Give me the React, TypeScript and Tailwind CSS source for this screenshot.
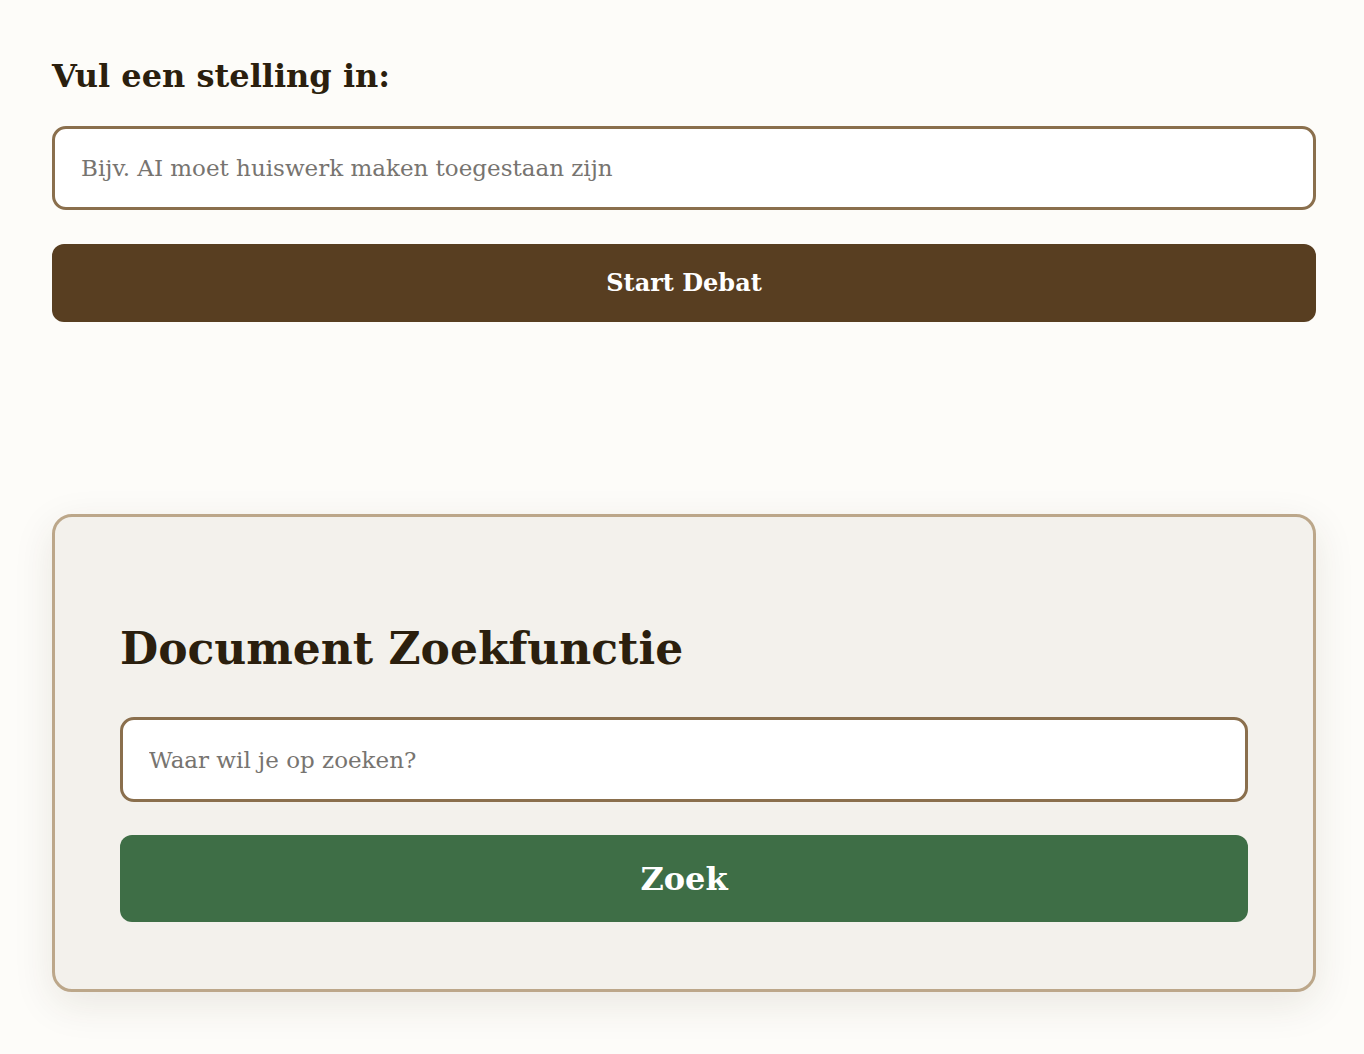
export default function App() {
  return (
    <div className="min-h-[1054px] bg-[#fdfcf9] pl-[52px] pr-[48px] pt-[52px] pb-[64px] text-[#2b1f0e] [font-family:'DejaVu_Serif',Georgia,serif]">
      <section>
        <h2 className="text-[32px] font-bold leading-[48px]">Vul een stelling in:</h2>
        <input
          type="text"
          placeholder="Bijv. AI moet huiswerk maken toegestaan zijn"
          className="mt-[26px] block h-[84px] w-full rounded-[14px] border-[3px] border-[#8a6f4d] bg-white px-[26px] text-[23px] text-[#2b1f0e] outline-none placeholder:text-[#777470]"
        />
        <button className="mt-[34px] block h-[78px] w-full rounded-[12px] bg-[#583e21] text-[24px] font-bold text-white">
          Start Debat
        </button>
      </section>

      <section className="mt-[192px] rounded-[20px] border-[3px] border-[#bca78a] bg-[#f3f1ec] px-[65px] pt-[104px] pb-[67px] shadow-[0_12px_40px_rgba(60,45,20,0.10)]">
        <h2 className="text-[44px] font-bold leading-[56px]">Document Zoekfunctie</h2>
        <input
          type="text"
          placeholder="Waar wil je op zoeken?"
          className="mt-[40px] block h-[85px] w-full rounded-[14px] border-[3px] border-[#8a6f4d] bg-white px-[26px] text-[23px] text-[#2b1f0e] outline-none placeholder:text-[#777470]"
        />
        <button className="mt-[33px] block h-[87px] w-full rounded-[12px] bg-[#3e6e46] text-[32px] font-bold text-white">
          Zoek
        </button>
      </section>
    </div>
  );
}
